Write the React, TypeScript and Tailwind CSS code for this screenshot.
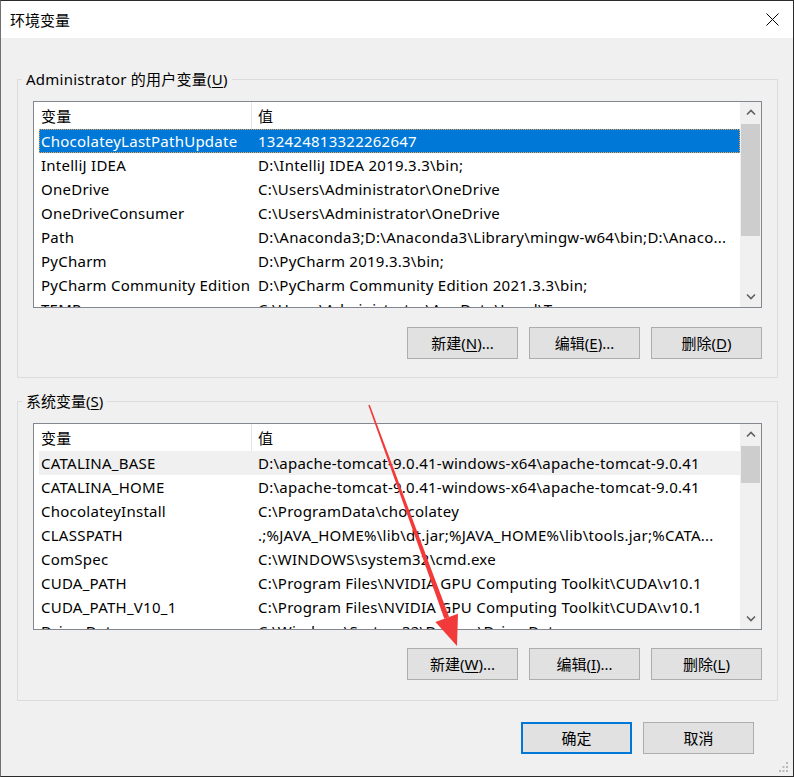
import React from 'react';

type EnvVar = { name: string; value: string };

const USER_VARS: EnvVar[] = [
  { name: 'ChocolateyLastPathUpdate', value: '132424813322262647' },
  { name: 'IntelliJ IDEA', value: 'D:\\IntelliJ IDEA 2019.3.3\\bin;' },
  { name: 'OneDrive', value: 'C:\\Users\\Administrator\\OneDrive' },
  { name: 'OneDriveConsumer', value: 'C:\\Users\\Administrator\\OneDrive' },
  { name: 'Path', value: 'D:\\Anaconda3;D:\\Anaconda3\\Library\\mingw-w64\\bin;D:\\Anaco...' },
  { name: 'PyCharm', value: 'D:\\PyCharm 2019.3.3\\bin;' },
  { name: 'PyCharm Community Edition', value: 'D:\\PyCharm Community Edition 2021.3.3\\bin;' },
  { name: 'TEMP', value: 'C:\\Users\\Administrator\\AppData\\Local\\Temp' },
];

const SYSTEM_VARS: EnvVar[] = [
  { name: 'CATALINA_BASE', value: 'D:\\apache-tomcat-9.0.41-windows-x64\\apache-tomcat-9.0.41' },
  { name: 'CATALINA_HOME', value: 'D:\\apache-tomcat-9.0.41-windows-x64\\apache-tomcat-9.0.41' },
  { name: 'ChocolateyInstall', value: 'C:\\ProgramData\\chocolatey' },
  { name: 'CLASSPATH', value: '.;%JAVA_HOME%\\lib\\dt.jar;%JAVA_HOME%\\lib\\tools.jar;%CATA...' },
  { name: 'ComSpec', value: 'C:\\WINDOWS\\system32\\cmd.exe' },
  { name: 'CUDA_PATH', value: 'C:\\Program Files\\NVIDIA GPU Computing Toolkit\\CUDA\\v10.1' },
  { name: 'CUDA_PATH_V10_1', value: 'C:\\Program Files\\NVIDIA GPU Computing Toolkit\\CUDA\\v10.1' },
  { name: 'DriverData', value: 'C:\\Windows\\System32\\Drivers\\DriverData' },
];

function Chevron({ up }: { up?: boolean }) {
  return (
    <svg width="10" height="7" viewBox="0 0 10 7" className="text-[#606060]">
      <path
        d={up ? 'M1 5.5 L5 1.5 L9 5.5' : 'M1 1.5 L5 5.5 L9 1.5'}
        fill="none"
        stroke="currentColor"
        strokeWidth="1.6"
      />
    </svg>
  );
}

function Mnemonic({ label, letter, tail = '' }: { label: string; letter: string; tail?: string }) {
  return (
    <span>
      {label}(<span className="underline underline-offset-[2px]">{letter}</span>){tail}
    </span>
  );
}

function VarList({
  rows,
  focused,
  thumbHeight,
}: {
  rows: EnvVar[];
  focused: boolean;
  thumbHeight: string;
}) {
  return (
    <div className="flex h-[207px] w-[729px] overflow-hidden border border-[#828790] bg-white">
      <div className="flex min-w-0 flex-1 flex-col overflow-hidden tracking-[0.25px]">
        <div className="flex h-[27px] shrink-0 items-center">
          <div className="flex h-full w-[218px] items-center border-r border-[#e5e5e5] pl-[7px]">变量</div>
          <div className="pl-[6px]">值</div>
        </div>
        {rows.map((row, i) => {
          const selected = i === 0;
          return (
            <div
              key={row.name}
              className={
                selected
                  ? focused
                    ? 'ml-[5px] flex h-[24px] shrink-0 items-center whitespace-nowrap bg-[#0078d7] text-white outline-1 outline-dotted outline-[#f0a050] -outline-offset-1'
                    : 'ml-[5px] flex h-[24px] shrink-0 items-center whitespace-nowrap bg-[#f0f0f0]'
                  : 'ml-[5px] flex h-[24px] shrink-0 items-center whitespace-nowrap'
              }
            >
              <div className="w-[212px] shrink-0 overflow-hidden pl-[2px]">{row.name}</div>
              <div className="overflow-hidden pl-[7px]">{row.value}</div>
            </div>
          );
        })}
      </div>
      <div className="flex w-[21px] shrink-0 flex-col bg-[#f0f0f0]">
        <div className="flex h-[21px] items-center justify-center">
          <Chevron up />
        </div>
        <div className="flex-1 px-px pt-px">
          <div className={`${thumbHeight} w-full bg-[#cdcdcd]`} />
        </div>
        <div className="flex h-[21px] items-center justify-center">
          <Chevron />
        </div>
      </div>
    </div>
  );
}

function WinButton({ children, primary }: { children: React.ReactNode; primary?: boolean }) {
  return (
    <button
      type="button"
      className={
        primary
          ? 'flex h-[32px] w-[111px] items-center justify-center border-2 border-[#0078d7] bg-[#e1e1e1]'
          : 'flex h-[32px] w-[111px] items-center justify-center border border-[#adadad] bg-[#e1e1e1]'
      }
    >
      {children}
    </button>
  );
}

export default function App() {
  return (
    <div className="relative flex h-[777px] w-[794px] flex-col overflow-hidden border border-[#2b2b2b] border-l-[#707070] bg-[#f0f0f0] font-['Noto_Sans','Noto_Sans_CJK_SC',sans-serif] text-[15px] leading-[20px] text-black">
      <header className="flex h-[37px] shrink-0 items-center justify-between bg-white pl-[9px]">
        <span>环境变量</span>
        <svg width="13" height="13" viewBox="0 0 13 13" className="mr-[14px]">
          <path d="M0.5 0.5 L12.5 12.5 M12.5 0.5 L0.5 12.5" stroke="#000" strokeWidth="1" />
        </svg>
      </header>

      <fieldset className="ml-[16px] mt-[31px] w-[761px] border border-[#dcdcdc] p-0">
        <legend className="ml-[4px] px-[4px] leading-[20px] tracking-[0.25px]">
          Administrator 的用户变量(<span className="underline underline-offset-[2px]">U</span>)
        </legend>
        <div className="px-[15px] pb-[18px] pt-[12px]">
          <VarList rows={USER_VARS} focused thumbHeight="h-[112px]" />
          <div className="mt-[19px] flex justify-end gap-[11px]">
            <WinButton>
              <Mnemonic label="新建" letter="N" tail="..." />
            </WinButton>
            <WinButton>
              <Mnemonic label="编辑" letter="E" tail="..." />
            </WinButton>
            <WinButton>
              <Mnemonic label="删除" letter="D" />
            </WinButton>
          </div>
        </div>
      </fieldset>

      <fieldset className="ml-[16px] mt-[13px] w-[761px] border border-[#dcdcdc] p-0">
        <legend className="ml-[4px] px-[4px] leading-[20px]">
          系统变量(<span className="underline underline-offset-[2px]">S</span>)
        </legend>
        <div className="px-[15px] pb-[20px] pt-[12px]">
          <VarList rows={SYSTEM_VARS} focused={false} thumbHeight="h-[37px]" />
          <div className="mt-[18px] flex justify-end gap-[11px]">
            <WinButton>
              <Mnemonic label="新建" letter="W" tail="..." />
            </WinButton>
            <WinButton>
              <Mnemonic label="编辑" letter="I" tail="..." />
            </WinButton>
            <WinButton>
              <Mnemonic label="删除" letter="L" />
            </WinButton>
          </div>
        </div>
      </fieldset>

      <div className="mt-[21px] flex justify-end gap-[11px] pr-[39px]">
        <WinButton primary>确定</WinButton>
        <WinButton>取消</WinButton>
      </div>

      {/* resize grip */}
      <svg width="12" height="12" viewBox="0 0 12 12" className="pointer-events-none absolute bottom-[3px] right-[4px]">
        <rect x="9" y="1" width="2" height="2" fill="#b9b9b9" />
        <rect x="5.5" y="5" width="2" height="2" fill="#b9b9b9" />
        <rect x="9" y="5" width="2" height="2" fill="#b9b9b9" />
        <rect x="2" y="9" width="2" height="2" fill="#b9b9b9" />
        <rect x="5.5" y="9" width="2" height="2" fill="#b9b9b9" />
        <rect x="9" y="9" width="2" height="2" fill="#b9b9b9" />
      </svg>

      {/* red annotation arrow */}
      <svg width="794" height="777" viewBox="0 0 794 777" className="pointer-events-none absolute left-[-1px] top-[-1px]">
        <polygon points="368.3,405.2 369.7,404.8 449.1,616.9 444.3,618.7" fill="#f23a3a" />
        <polygon points="457,646 458,613.7 435.4,621.9" fill="#f23a3a" />
      </svg>
    </div>
  );
}
